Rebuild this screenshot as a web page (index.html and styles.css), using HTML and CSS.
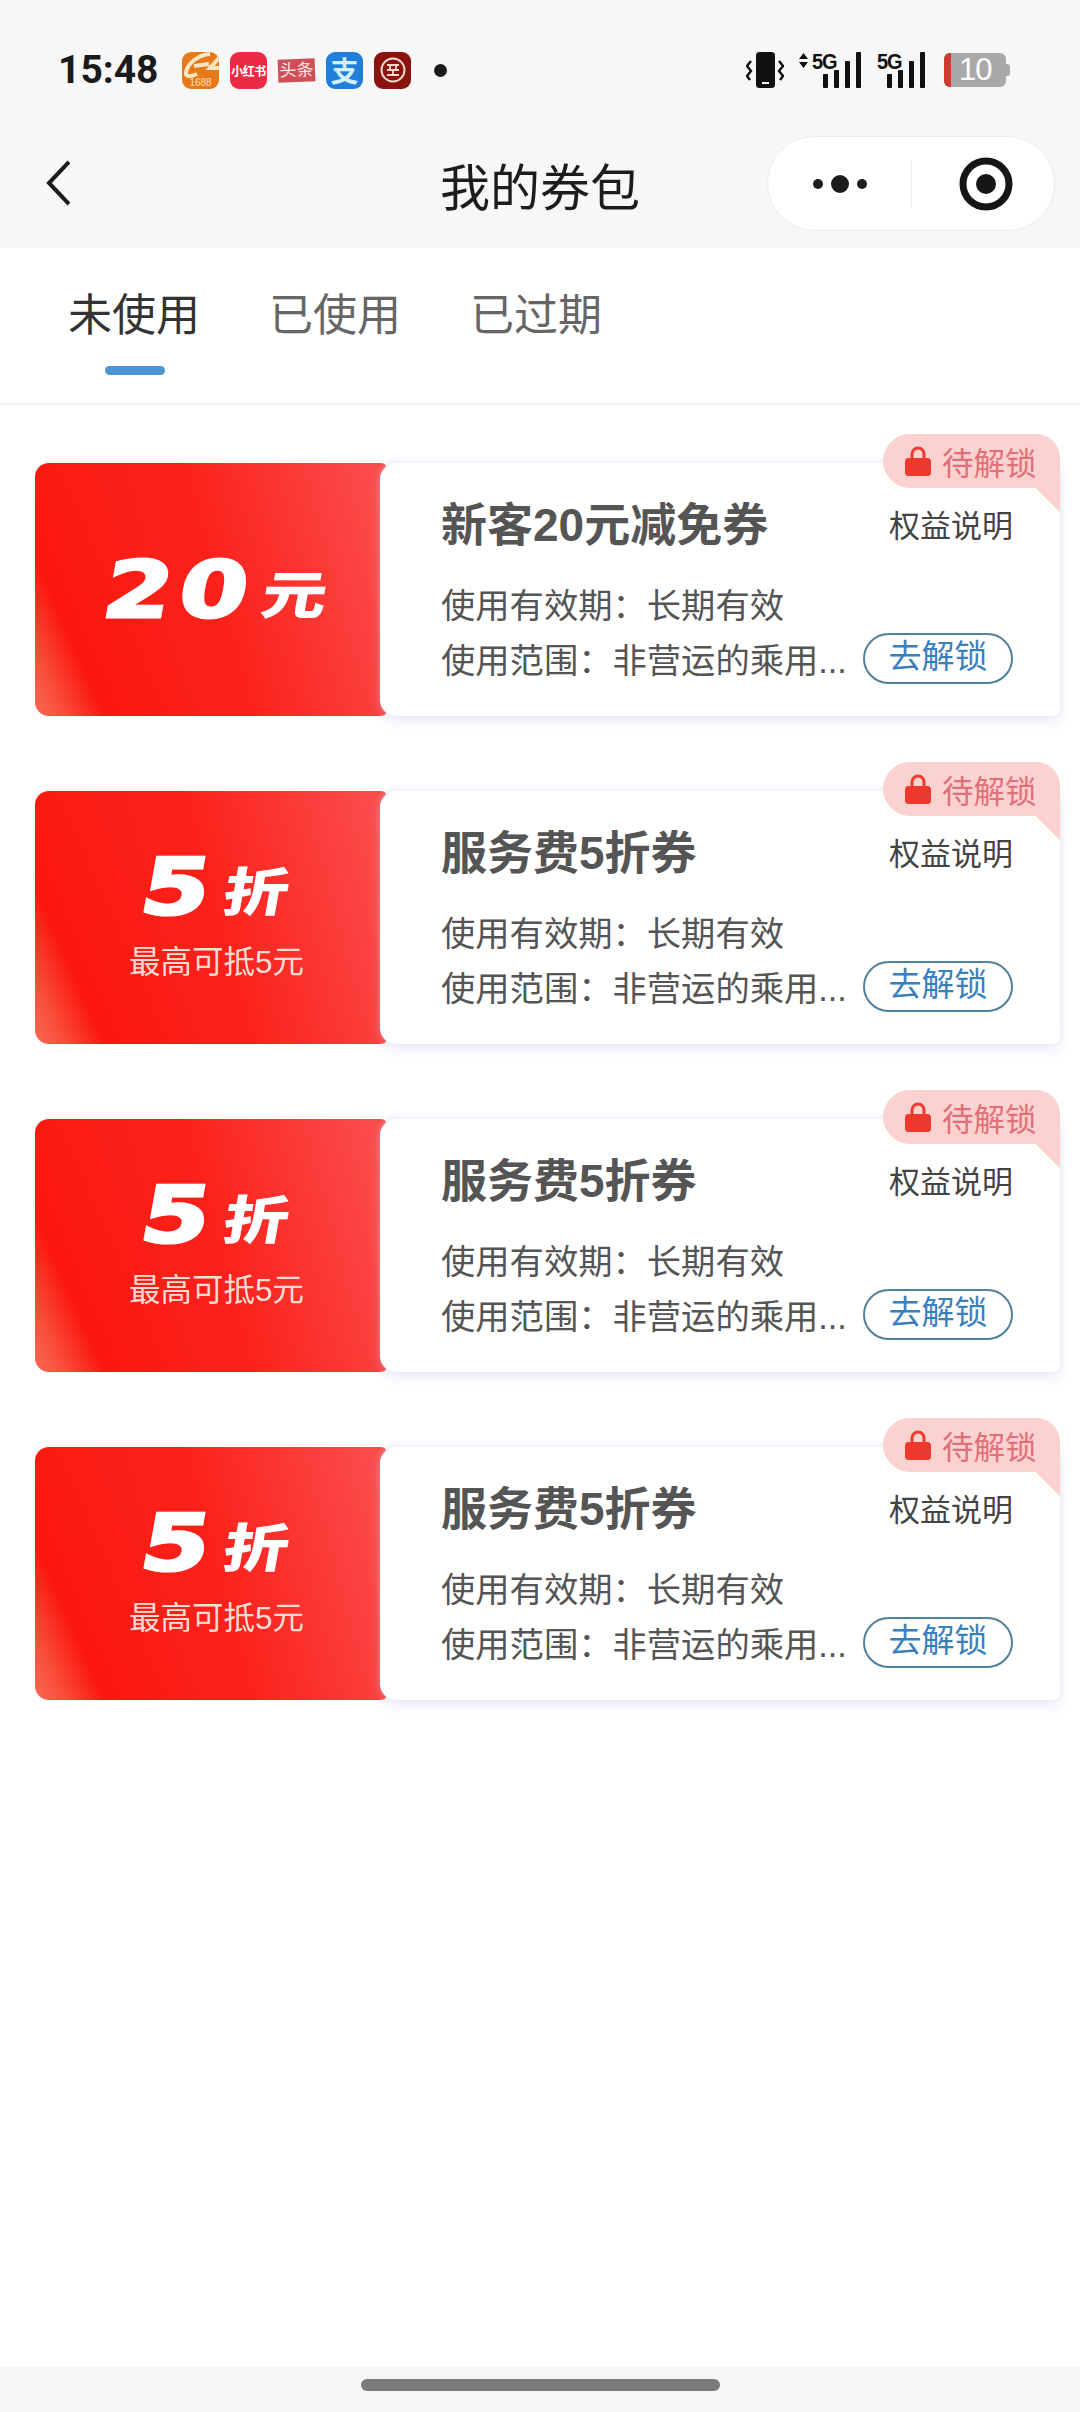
FILE: index.html
```html
<!DOCTYPE html>
<html lang="zh-CN">
<head>
  <meta charset="utf-8">
  <title>我的券包</title>
  <link rel="stylesheet" href="styles.css">
</head>
<body>
<header class="top">
  <div class="status">
    <span class="time">15:48</span>
    <div class="apps">
      <span class="app app-1688">
        <svg class="swoosh" width="37" height="27" viewBox="0 0 37 27"><path d="M28 2C16 3 6 11 4 20c-1 5 4 5 11 2M12 14l15-2M37 6l-9 10h9" fill="none" stroke="#fbe6c4" stroke-width="4"/></svg>
        <span class="app-1688-num">1688</span>
      </span>
      <span class="app app-xhs">小红书</span>
      <span class="app-toutiao">头条</span>
      <span class="app app-alipay">支</span>
      <span class="app app-bank">
        <svg width="26" height="26" viewBox="0 0 26 26"><circle cx="13" cy="13" r="11.5" fill="none" stroke="#f6d9cf" stroke-width="2"/><path d="M7 8h12M7 18h12M7 13h12M10 8v5M16 8v5M13 13v5" fill="none" stroke="#f6d9cf" stroke-width="1.8"/></svg>
      </span>
      <span class="dot"></span>
    </div>
    <div class="sys">
      <svg width="38" height="36" viewBox="0 0 38 36"><rect x="10" y="0" width="19" height="36" rx="3.5" fill="#111"/><rect x="16" y="30" width="7" height="2" fill="#fff"/><path d="M5 9L1 14l4 5-4 5 3 4M33 9l4 5-4 5 4 5-3 4" fill="none" stroke="#111" stroke-width="2.4"/></svg>
      <div class="net net-first">
        <svg class="arrows" width="9" height="15" viewBox="0 0 9 15"><path d="M4.500 0L9 6H0zM4.500 15L0 9h9z" fill="#111"/></svg>
        <span class="g5">5G</span>
        <div class="bars"><i class="b1"></i><i class="b2"></i><i class="b3"></i><i class="b4"></i></div>
      </div>
      <div class="net">
        <span class="g5">5G</span>
        <div class="bars"><i class="b1"></i><i class="b2"></i><i class="b3"></i><i class="b4"></i></div>
      </div>
      <div class="battery"><span class="battery-low"></span><span class="battery-num">10</span><span class="battery-nub"></span></div>
    </div>
  </div>
  <div class="nav">
    <svg class="back" width="24" height="46" viewBox="0 0 24 46"><path d="M23 2L3 23l20 21" fill="none" stroke="#1c1c1c" stroke-width="4"/></svg>
    <h1 class="title">我的券包</h1>
    <div class="capsule">
      <span class="more"><i class="s"></i><i class="l"></i><i class="s"></i></span>
      <span class="sep"></span>
      <svg class="target" width="54" height="54" viewBox="0 0 54 54"><circle cx="27" cy="27" r="23" fill="none" stroke="#161616" stroke-width="7"/><circle cx="27" cy="27" r="10" fill="#161616"/></svg>
    </div>
  </div>
</header>

<main class="main">
  <div class="tabs">
    <div class="tab active">未使用</div>
    <div class="tab">已使用</div>
    <div class="tab">已过期</div>
  </div>

  <div class="list">
    <div class="card">
      <div class="face">
        <div class="big"><span class="num">20</span><span class="unit">元</span></div>
      </div>
      <div class="panel">
        <div class="head"><div class="name">新客20元减免券</div><div class="rights">权益说明</div></div>
        <div class="line">使用有效期：长期有效</div>
        <div class="foot"><div class="line scope">使用范围：非营运的乘用...</div><div class="btn">去解锁</div></div>
      </div>
      <div class="badge">
        <svg width="26" height="30" viewBox="0 0 26 30"><path d="M7 14V8a6 6 0 0 1 12 0v6" fill="none" stroke="#ee3a2e" stroke-width="3"/><rect x="0" y="12" width="26" height="18" rx="3.500" fill="#ee3a2e"/></svg>
        <span>待解锁</span>
      </div>
    </div>

    <div class="card">
      <div class="face">
        <div class="big"><span class="num">5</span><span class="unit">折</span></div>
        <div class="sub">最高可抵5元</div>
      </div>
      <div class="panel">
        <div class="head"><div class="name">服务费5折券</div><div class="rights">权益说明</div></div>
        <div class="line">使用有效期：长期有效</div>
        <div class="foot"><div class="line scope">使用范围：非营运的乘用...</div><div class="btn">去解锁</div></div>
      </div>
      <div class="badge">
        <svg width="26" height="30" viewBox="0 0 26 30"><path d="M7 14V8a6 6 0 0 1 12 0v6" fill="none" stroke="#ee3a2e" stroke-width="3"/><rect x="0" y="12" width="26" height="18" rx="3.500" fill="#ee3a2e"/></svg>
        <span>待解锁</span>
      </div>
    </div>

    <div class="card">
      <div class="face">
        <div class="big"><span class="num">5</span><span class="unit">折</span></div>
        <div class="sub">最高可抵5元</div>
      </div>
      <div class="panel">
        <div class="head"><div class="name">服务费5折券</div><div class="rights">权益说明</div></div>
        <div class="line">使用有效期：长期有效</div>
        <div class="foot"><div class="line scope">使用范围：非营运的乘用...</div><div class="btn">去解锁</div></div>
      </div>
      <div class="badge">
        <svg width="26" height="30" viewBox="0 0 26 30"><path d="M7 14V8a6 6 0 0 1 12 0v6" fill="none" stroke="#ee3a2e" stroke-width="3"/><rect x="0" y="12" width="26" height="18" rx="3.500" fill="#ee3a2e"/></svg>
        <span>待解锁</span>
      </div>
    </div>

    <div class="card">
      <div class="face">
        <div class="big"><span class="num">5</span><span class="unit">折</span></div>
        <div class="sub">最高可抵5元</div>
      </div>
      <div class="panel">
        <div class="head"><div class="name">服务费5折券</div><div class="rights">权益说明</div></div>
        <div class="line">使用有效期：长期有效</div>
        <div class="foot"><div class="line scope">使用范围：非营运的乘用...</div><div class="btn">去解锁</div></div>
      </div>
      <div class="badge">
        <svg width="26" height="30" viewBox="0 0 26 30"><path d="M7 14V8a6 6 0 0 1 12 0v6" fill="none" stroke="#ee3a2e" stroke-width="3"/><rect x="0" y="12" width="26" height="18" rx="3.500" fill="#ee3a2e"/></svg>
        <span>待解锁</span>
      </div>
    </div>
  </div>
</main>

<footer class="bottom"><span class="home"></span></footer>
</body>
</html>
```

FILE: styles.css
```css
* {
  box-sizing: border-box;
}

html, body {
  margin: 0;
  padding: 0;
}

body {
  width: 1080px;
  height: 2412px;
  display: flex;
  flex-direction: column;
  background: #fff;
  font-family: "Liberation Sans", "Noto Sans CJK SC", sans-serif;
  color: #222;
  overflow: hidden;
}

/* top: status bar + nav */
.top {
  height: 248px;
  background: #f7f7f7;
  flex: none;
  padding-top: 44px;
}

.status {
  height: 52px;
  display: flex;
  align-items: center;
  padding: 0 74px 0 58px;
}

.time {
  width: 124px;
  font-size: 39px;
  font-weight: 700;
  color: #1a1a1a;
  font-family: "Roboto", "Liberation Sans", sans-serif;
}

.apps {
  display: flex;
  align-items: center;
  gap: 11px;
}

.app {
  width: 37px;
  height: 37px;
  border-radius: 9px;
  display: flex;
  align-items: center;
  justify-content: center;
  color: #fff;
  overflow: hidden;
  position: relative;
}

.app-1688 {
  background: #e67a1a;
  display: block;
}

.swoosh {
  display: block;
}

.app-1688-num {
  position: absolute;
  left: 0;
  right: 0;
  bottom: 1px;
  text-align: center;
  font-size: 10px;
  line-height: 10px;
  color: #fbe0b8;
}

.app-xhs {
  background: #ec2a46;
  font-size: 12px;
  font-weight: 700;
  white-space: nowrap;
  letter-spacing: -0.500px;
}

.app-toutiao {
  width: 37px;
  height: 23px;
  line-height: 23px;
  background: #cf4f58;
  color: #fbe9e6;
  font-size: 17px;
  text-align: center;
  transform: rotate(-2deg);
}

.app-alipay {
  background: #1f7fdc;
  font-size: 28px;
  font-weight: 700;
  color: #d5f0fb;
}

.app-bank {
  background: #8a130f;
}

.dot {
  width: 13px;
  height: 13px;
  margin-left: 12px;
  border-radius: 50%;
  background: #1c1c1c;
}

.sys {
  margin-left: auto;
  display: flex;
  align-items: center;
}

.net {
  display: flex;
  position: relative;
  height: 36px;
  width: 49px;
  margin-left: 15px;
  justify-content: flex-end;
}

.net-first {
  width: 62px;
  margin-left: 15px;
}

.arrows {
  position: absolute;
  left: 0;
  top: 1px;
}

.g5 {
  position: absolute;
  top: -1px;
  left: 1px;
  font-size: 20px;
  font-weight: 700;
  letter-spacing: -1px;
  color: #111;
  line-height: 20px;
  transform: scaleY(1.1);
}

.net-first .g5 {
  left: 13px;
}

.bars {
  display: flex;
  align-items: flex-end;
  gap: 5.500px;
}

.bars i {
  display: block;
  width: 5.500px;
  background: #111;
  border-radius: 1px;
}

.b1 { height: 14px; }
.b2 { height: 18px; }
.b3 { height: 27px; }
.b4 { height: 36px; }

.battery {
  width: 62px;
  height: 34px;
  margin-left: 19px;
  background: #a9a9a9;
  border-radius: 6px;
  position: relative;
  display: flex;
  align-items: center;
  padding-left: 15px;
}

.battery-low {
  position: absolute;
  left: 0;
  top: 0;
  bottom: 0;
  width: 7px;
  background: #cf3b30;
  border-radius: 6px 0 0 6px;
}

.battery-num {
  color: #fff;
  font-size: 31px;
  letter-spacing: -1px;
}

.battery-nub {
  position: absolute;
  right: -4px;
  top: 11px;
  width: 4px;
  height: 12px;
  background: #a9a9a9;
  border-radius: 0 3px 3px 0;
}

.nav {
  height: 95px;
  margin-top: 40px;
  padding: 0 25px 0 46px;
  display: grid;
  grid-template-columns: 1fr auto 1fr;
  align-items: center;
}

.back {
  margin-top: -2px;
}

.title {
  margin: 0;
  font-size: 50px;
  font-weight: 400;
  color: #1c1c1c;
  padding-right: 21px;
}

.capsule {
  justify-self: end;
  width: 288px;
  height: 95px;
  border-radius: 48px;
  background: #fff;
  border: 1px solid #ececec;
  display: flex;
  align-items: center;
}

.more {
  width: 143px;
  display: flex;
  align-items: center;
  justify-content: center;
  gap: 8px;
}

.more i {
  display: block;
  border-radius: 50%;
  background: #1c1c1c;
}

.more .s { width: 10px; height: 10px; }
.more .l { width: 18px; height: 18px; }

.sep {
  width: 1px;
  height: 47px;
  background: #ececec;
}

.target {
  margin-left: 47px;
}

/* tabs */
.main {
  flex: 1;
  background: #fff;
}

.tabs {
  height: 157px;
  padding: 38px 0 0 68px;
  display: flex;
  gap: 69px;
  border-bottom: 2px solid #f2f2f4;
}

.tab {
  font-size: 44px;
  line-height: 60px;
  color: #666;
  position: relative;
  height: 60px;
}

.tab.active {
  color: #333;
}

.tab.active::after {
  content: "";
  position: absolute;
  left: 37px;
  top: 80px;
  width: 60px;
  height: 9px;
  border-radius: 5px;
  background: #4a96d6;
}

/* coupon cards */
.list {
  padding: 58px 20px 0 35px;
  display: flex;
  flex-direction: column;
  gap: 75px;
}

.card {
  height: 253px;
  display: flex;
  position: relative;
}

.face {
  width: 352px;
  flex: none;
  padding-left: 11px;
  border-radius: 14px 6px 6px 14px;
  display: flex;
  flex-direction: column;
  align-items: center;
  justify-content: center;
  color: #fff;
  background:
    linear-gradient(66deg, #f96a52 0%, #f9503c 6%, #fb170e 15%, rgba(251, 23, 14, 0) 36%),
    linear-gradient(75deg, #fb1c12 0%, #fb2019 50%, #fb5050 100%);
}

.big {
  display: flex;
  align-items: flex-end;
  height: 70px;
  transform: skewX(-10deg) scaleX(1.25);
}

.num {
  font-family: "DejaVu Sans", sans-serif;
  font-size: 78px;
  font-weight: 700;
  line-height: 70px;
  -webkit-text-stroke: 3px #fff;
  letter-spacing: 6px;
}

.unit {
  font-size: 52px;
  font-weight: 900;
  line-height: 58px;
  margin-left: 6px;
}

.sub {
  margin-top: 19px;
  font-size: 31.500px;
  line-height: 42px;
  color: #fbdcd4;
}

.panel {
  flex: 1;
  margin-left: -7px;
  position: relative;
  background: #fff;
  border-radius: 16px 6px 6px 16px;
  padding: 0 47px 0 61px;
  box-shadow: 0 5px 12px rgba(190, 195, 225, 0.35), 0 -2px 5px rgba(205, 210, 235, 0.3);
}

.head {
  display: flex;
  justify-content: space-between;
  align-items: center;
  padding-top: 37px;
  height: 87px;
}

.name {
  font-size: 46px;
  line-height: 50px;
  font-weight: 700;
  color: #555;
}

.rights {
  font-size: 31px;
  color: #444;
  margin-bottom: 4px;
}

.line {
  margin-top: 29px;
  font-size: 34.300px;
  line-height: 55px;
  color: #555;
  white-space: nowrap;
}

.foot {
  display: flex;
  align-items: center;
  justify-content: space-between;
}

.scope {
  margin-top: 0;
}

.btn {
  width: 150px;
  height: 51px;
  margin-top: -7px;
  border: 2px solid #4f8199;
  border-radius: 26px;
  text-align: center;
  font-size: 33px;
  line-height: 44px;
  color: #3a80bd;
  background: #fff;
}

.badge {
  position: absolute;
  top: -29px;
  right: 0;
  width: 177px;
  height: 54px;
  display: flex;
  align-items: center;
  gap: 11px;
  padding-left: 22px;
  background: #fbd2d0;
  border-radius: 27px 24px 0 27px;
  color: #df6f78;
  font-size: 31.500px;
}

.badge::after {
  content: "";
  position: absolute;
  right: 0;
  top: 54px;
  width: 24px;
  height: 25px;
  background: linear-gradient(to top right, transparent 50%, #fbd2d0 50%);
}

/* bottom gesture bar */
.bottom {
  height: 45px;
  flex: none;
  background: #f6f6f6;
  display: flex;
  justify-content: center;
  padding-top: 12px;
}

.home {
  width: 359px;
  height: 12px;
  border-radius: 6px;
  background: #7b7b7b;
}
```
